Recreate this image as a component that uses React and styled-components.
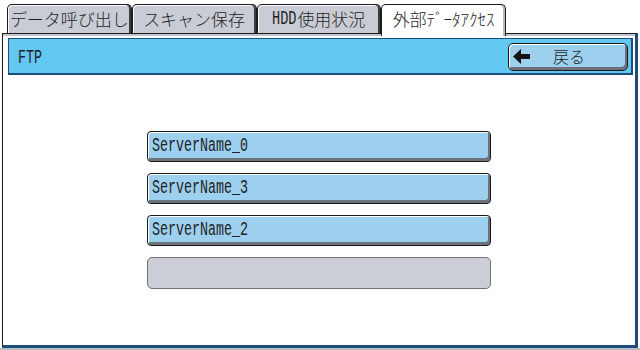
import React from "react";
import styled, { createGlobalStyle } from "styled-components";

const Global = createGlobalStyle`
  html, body { margin: 0; padding: 0; background: #ffffff; }
  body { font-family: "Noto Sans CJK JP", "Liberation Sans", sans-serif; }
`;

const Screen = styled.div`
  width: 640px;
  height: 350px;
  overflow: hidden;
  background: #ffffff;
  display: flex;
  flex-direction: column;
`;

const TabBar = styled.div`
  display: flex;
  align-items: flex-end;
  height: 33px;
  box-sizing: border-box;
  padding: 4px 0 0 7px;
`;

const Tab = styled.div`
  position: relative;
  z-index: ${(p) => (p.$active ? 2 : 0)};
  width: 124.75px;
  height: ${(p) => (p.$active ? "32px" : "29px")};
  margin-bottom: ${(p) => (p.$active ? "-3px" : "0")};
  align-self: flex-start;
  box-sizing: border-box;
  border: 1px solid #1c1c1c;
  border-bottom: none;
  border-radius: 5px 5px 0 0;
  background: ${(p) => (p.$active ? "#ffffff" : "#c9ccd4")};
  box-shadow: ${(p) =>
    p.$active ? "inset -2px 0 0 #b4b8c0" : "inset -2px 0 0 #3a3c40, inset 1px 1px 0 #ffffff"};
  display: flex;
  justify-content: center;
  padding-top: 3px;
  font-size: 17px;
  font-weight: 300;
  line-height: 22px;
  color: #1e1e1e;
  white-space: nowrap;
  overflow: hidden;
`;

const Narrow = styled.span`
  font-family: "Liberation Mono", monospace;
  display: inline-block;
  font-size: 20px;
  width: 25px;
  transform: scaleX(0.68);
  transform-origin: left center;
`;

const Panel = styled.div`
  position: relative;
  z-index: 1;
  margin-left: 2px;
  width: 636px;
  height: 315px;
  box-sizing: border-box;
  border-top: 1px solid #1c1c1c;
  border-left: 1px solid #1c1c1c;
  border-right: 3px solid #1d4b7a;
  border-bottom: 3px solid #1d4b7a;
  box-shadow: inset 0 2px 0 #c2c5cd;
  display: flex;
  flex-direction: column;
`;

const BottomStrip = styled.div`
  height: 2px;
  background: #b9bcc3;
`;

const Header = styled.div`
  margin: 4px 2px 0 5px;
  height: 37px;
  box-sizing: border-box;
  border-top: 1px solid #1d4b7a;
  border-left: 1px solid #1d4b7a;
  border-right: 2px solid #1d4b7a;
  border-bottom: 2px solid #1d4b7a;
  background: #62c8f2;
  display: flex;
  justify-content: space-between;
  align-items: flex-start;
  padding-left: 9px;
`;

const MonoText = styled.span`
  display: inline-block;
  font-family: "Liberation Mono", monospace;
  font-size: 20px;
  line-height: 20px;
  transform: scaleX(0.667);
  transform-origin: left center;
  color: #222222;
  white-space: nowrap;
`;

const Title = styled(MonoText)`
  margin-top: 9px;
`;

const BackButton = styled.div`
  margin: 4px 3px 0 0;
  width: 120px;
  height: 28px;
  box-sizing: border-box;
  border: 1px solid #1a1a1a;
  border-radius: 5px;
  background: #9dd0ef;
  box-shadow: inset 1px 1px 0 #ffffff, inset -2px -3px 0 #6b7179;
  display: flex;
  align-items: center;
  padding: 0 0 2px 4px;
  gap: 23px;
  font-size: 16px;
  font-weight: 300;
  color: #1e1e1e;
`;

const ArrowIcon = () => (
  <svg width="17" height="15" viewBox="0 0 17 15" aria-hidden="true">
    <polygon points="0,7.5 8,0 8,15" fill="#141414" />
    <rect x="7" y="5" width="10" height="5" fill="#141414" />
  </svg>
);

const List = styled.div`
  margin-top: 56px;
  display: flex;
  flex-direction: column;
  align-items: center;
  gap: 11px;
`;

const ServerButton = styled.div`
  width: 344px;
  height: ${(p) => (p.$empty ? "32px" : "31px")};
  box-sizing: border-box;
  border: 1px solid ${(p) => (p.$empty ? "#707379" : "#1b1b1b")};
  border-radius: ${(p) => (p.$empty ? "5px" : "4px")};
  background: ${(p) => (p.$empty ? "#cbced6" : "#9dd0ef")};
  box-shadow: ${(p) =>
    p.$empty ? "none" : "inset 1px 1px 0 #ffffff, inset -2px -3px 0 #6d737b"};
  display: flex;
  align-items: center;
  padding: 0 0 1px 4px;
`;

const servers = ["ServerName_0", "ServerName_3", "ServerName_2"];

export default function App() {
  return (
    <>
      <Global />
      <Screen>
        <TabBar>
          <Tab>データ呼び出し</Tab>
          <Tab>スキャン保存</Tab>
          <Tab>
            <Narrow>HDD</Narrow>使用状況
          </Tab>
          <Tab $active>外部ﾃﾞｰﾀｱｸｾｽ</Tab>
        </TabBar>
        <Panel>
          <Header>
            <Title>FTP</Title>
            <BackButton>
              <ArrowIcon />
              <span>戻る</span>
            </BackButton>
          </Header>
          <List>
            {servers.map((s) => (
              <ServerButton key={s}>
                <MonoText>{s}</MonoText>
              </ServerButton>
            ))}
            <ServerButton $empty />
          </List>
        </Panel>
        <BottomStrip />
      </Screen>
    </>
  );
}
